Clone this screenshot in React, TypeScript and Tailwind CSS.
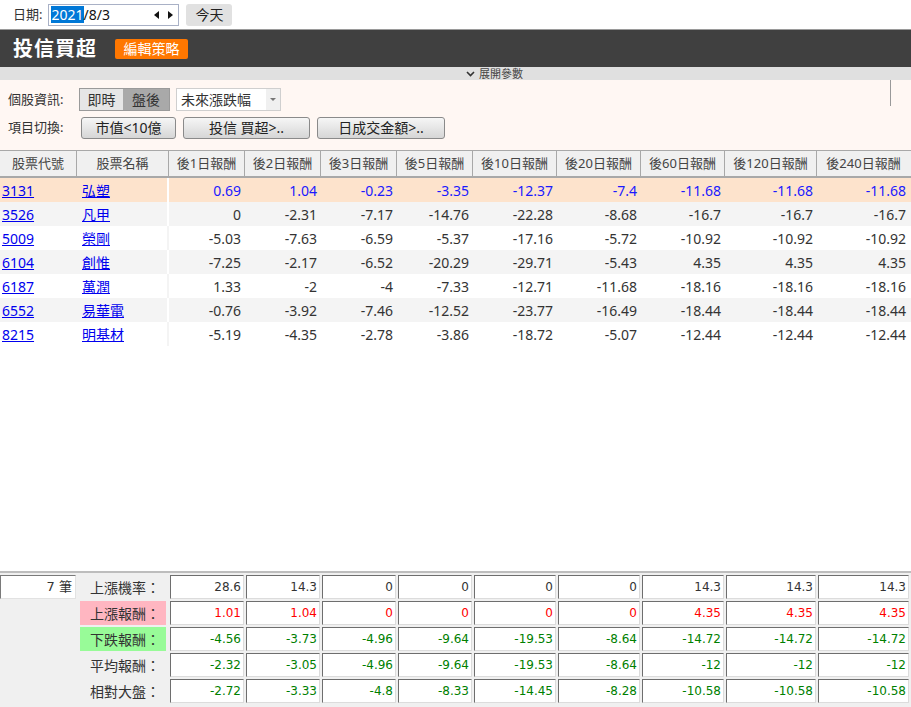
import React from "react";

const FONT = { fontFamily: '"Noto Sans", "Noto Sans CJK TC", sans-serif' };
const NUM_FONT = { fontFamily: '"DejaVu Sans", "Noto Sans CJK TC", sans-serif' };

const COLS = "grid grid-cols-[77px_92px_76px_76px_76px_76px_84px_84px_84px_92px_93px]";

const headers = [
  "後1日報酬",
  "後2日報酬",
  "後3日報酬",
  "後5日報酬",
  "後10日報酬",
  "後20日報酬",
  "後60日報酬",
  "後120日報酬",
  "後240日報酬",
];

const rows: { code: string; name: string; vals: string[] }[] = [
  { code: "3131", name: "弘塑", vals: ["0.69", "1.04", "-0.23", "-3.35", "-12.37", "-7.4", "-11.68", "-11.68", "-11.68"] },
  { code: "3526", name: "凡甲", vals: ["0", "-2.31", "-7.17", "-14.76", "-22.28", "-8.68", "-16.7", "-16.7", "-16.7"] },
  { code: "5009", name: "榮剛", vals: ["-5.03", "-7.63", "-6.59", "-5.37", "-17.16", "-5.72", "-10.92", "-10.92", "-10.92"] },
  { code: "6104", name: "創惟", vals: ["-7.25", "-2.17", "-6.52", "-20.29", "-29.71", "-5.43", "4.35", "4.35", "4.35"] },
  { code: "6187", name: "萬潤", vals: ["1.33", "-2", "-4", "-7.33", "-12.71", "-11.68", "-18.16", "-18.16", "-18.16"] },
  { code: "6552", name: "易華電", vals: ["-0.76", "-3.92", "-7.46", "-12.52", "-23.77", "-16.49", "-18.44", "-18.44", "-18.44"] },
  { code: "8215", name: "明基材", vals: ["-5.19", "-4.35", "-2.78", "-3.86", "-18.72", "-5.07", "-12.44", "-12.44", "-12.44"] },
];

const summary: { label: string; labelBg: string; color: string; vals: string[] }[] = [
  { label: "上漲機率：", labelBg: "", color: "text-[#333]", vals: ["28.6", "14.3", "0", "0", "0", "0", "14.3", "14.3", "14.3"] },
  { label: "上漲報酬：", labelBg: "bg-[#ffb6c1]", color: "text-[#ff0000]", vals: ["1.01", "1.04", "0", "0", "0", "0", "4.35", "4.35", "4.35"] },
  { label: "下跌報酬：", labelBg: "bg-[#98fb98]", color: "text-[#008000]", vals: ["-4.56", "-3.73", "-4.96", "-9.64", "-19.53", "-8.64", "-14.72", "-14.72", "-14.72"] },
  { label: "平均報酬：", labelBg: "", color: "text-[#008000]", vals: ["-2.32", "-3.05", "-4.96", "-9.64", "-19.53", "-8.64", "-12", "-12", "-12"] },
  { label: "相對大盤：", labelBg: "", color: "text-[#008000]", vals: ["-2.72", "-3.33", "-4.8", "-8.33", "-14.45", "-8.28", "-10.58", "-10.58", "-10.58"] },
];

function GrayButton({ children, w }: { children: React.ReactNode; w: string }) {
  return (
    <button
      className={`${w} h-[22px] rounded-[3px] border border-[#8a8a8a] bg-gradient-to-b from-[#f6f6f6] to-[#d6d6d6] text-[14px] leading-none text-[#222]`}
    >
      {children}
    </button>
  );
}

export default function App() {
  return (
    <div className="w-[911px] h-[707px] bg-white flex flex-col overflow-hidden" style={FONT}>
      {/* date bar */}
      <div className="h-[29px] flex items-center pl-[13px] text-[13px] text-[#333]">
        <span>日期:</span>
        <div className="ml-[6px] w-[131px] h-[22px] border border-[#a9b1c6] flex items-center pl-[2px] text-[14px]">
          <span className="bg-[#0078d7] text-white leading-[17px]">2021</span>
          <span className="text-[#111] leading-[17px]">/8/3</span>
          <div className="ml-auto mr-[5px] flex items-center gap-[9px]">
            <svg width="5" height="8" viewBox="0 0 5 8"><path d="M5 0 L0 4 L5 8 Z" fill="#111" /></svg>
            <svg width="5" height="8" viewBox="0 0 5 8"><path d="M0 0 L5 4 L0 8 Z" fill="#111" /></svg>
          </div>
        </div>
        <button className="ml-[7px] w-[46px] h-[22px] rounded-[3px] bg-[#e1e1e1] text-[14px] text-[#222] leading-none">
          今天
        </button>
      </div>

      {/* title bar */}
      <div className="h-[38px] bg-[#404040] border-t border-[#9a9a9a] flex items-center pl-[13px]">
        <span className="text-white text-[20px] font-bold tracking-[1px]">投信買超</span>
        <button className="ml-[18px] h-[20px] w-[73px] rounded-[2px] bg-[#ff7700] text-white text-[14px] leading-none">
          編輯策略
        </button>
      </div>

      {/* expand bar */}
      <div className="h-[13px] bg-[#e0e0e0] flex items-center pl-[466px] text-[11px] text-[#444] leading-none">
        <svg width="9" height="6" viewBox="0 0 9 6" className="mr-[4px]">
          <path d="M1 1 L4.5 4.5 L8 1" stroke="#333" strokeWidth="1.6" fill="none" />
        </svg>
        展開參數
      </div>

      {/* params */}
      <div className="h-[70px] bg-[#fff7f3] relative pl-[8px] pt-[8px] text-[13px] text-[#333]">
        <div className="absolute left-[890px] top-0 w-px h-[26px] bg-[#999]" />
        <div className="flex items-center h-[23px]">
          <span className="w-[71px]">個股資訊:</span>
          <div className="flex h-[23px] border border-[#9a9a9a] text-[14px]">
            <span className="w-[43px] bg-[#e6e6e6] flex items-center justify-center">即時</span>
            <span className="w-[46px] bg-[#a9a9a9] flex items-center justify-center">盤後</span>
          </div>
          <div className="ml-[6px] w-[105px] h-[23px] border border-[#cfcfcf] bg-white flex items-center text-[14px]">
            <span className="pl-[4px]">未來漲跌幅</span>
            <div className="ml-auto w-[14px] h-full bg-[#f0f0f0] flex items-center justify-center">
              <svg width="6" height="3" viewBox="0 0 6 3"><path d="M0 0 L6 0 L3 3 Z" fill="#777" /></svg>
            </div>
          </div>
        </div>
        <div className="flex items-center h-[22px] mt-[6px]">
          <span className="w-[73px]">項目切換:</span>
          <GrayButton w="w-[95px]">市值&lt;10億</GrayButton>
          <span className="w-[7px]" />
          <GrayButton w="w-[127px]">投信 買超&gt;..</GrayButton>
          <span className="w-[7px]" />
          <GrayButton w="w-[128px]">日成交金額&gt;..</GrayButton>
        </div>
      </div>

      {/* table header */}
      <div className={`${COLS} h-[28px] bg-[#f0f0f0] border-t border-b-2 border-[#a8a8a8] text-[13px] text-[#444]`}>
        {["股票代號", "股票名稱", ...headers].map((h, i) => (
          <div
            key={h}
            className={`flex items-center justify-center ${i < 10 ? "border-r border-[#a8a8a8]" : ""}`}
          >
            {h}
          </div>
        ))}
      </div>

      {/* rows */}
      <div className="flex-1">
        {rows.map((r, idx) => {
          const bg = idx === 0 ? "bg-[#fde3cc]" : idx % 2 === 1 ? "bg-[#f4f4f4]" : "bg-white";
          const gap = idx % 2 === 1 || idx === 0 ? "border-[#ffffff]" : "border-[#f4f4f4]";
          const numColor = idx === 0 ? "text-[#1a1aff]" : "text-[#333]";
          return (
            <div key={r.code} className={`${COLS} h-[24px] ${bg} text-[14px]`}>
              <div className="flex items-center pl-[2px]">
                <a href="#" className="text-[#0000ee] underline">{r.code}</a>
              </div>
              <div className={`flex items-center pl-[5px] border-r-2 ${gap}`}>
                <a href="#" className="text-[#0000ee] underline">{r.name}</a>
              </div>
              {r.vals.map((v, j) => (
                <div key={j} className={`flex items-center justify-end pr-[4px] ${numColor}`}>
                  {v}
                </div>
              ))}
            </div>
          );
        })}
      </div>

      {/* summary */}
      <div className="h-[136px] bg-[#f0f0f0] border-t-2 border-[#bdbdbd] pt-[2px] flex flex-col gap-[2px]">
        {summary.map((s, si) => (
          <div key={s.label} className={`${COLS} h-[24px]`}>
            <div className="pr-[1px]">
              {si === 0 && (
                <div
                  className="h-[24px] bg-white border border-t-[#7a7a7a] border-l-[#7a7a7a] border-r-[#e2e2e2] border-b-[#e2e2e2] flex items-center justify-end pr-[3px] text-[13px] text-[#333]"
                  style={NUM_FONT}
                >
                  7 筆
                </div>
              )}
            </div>
            <div className="pl-[3px] pr-[3px]">
              <div className={`h-[24px] ${s.labelBg} flex items-center justify-end pr-[6px] text-[14px] text-[#333]`}>
                {s.label}
              </div>
            </div>
            {s.vals.map((v, j) => (
              <div key={j} className="px-[1px]">
                <div
                  className={`h-[24px] bg-white border border-t-[#6e6e6e] border-l-[#6e6e6e] border-r-[#dcdcdc] border-b-[#dcdcdc] flex items-center justify-end pr-[2px] text-[12px] ${s.color}`}
                  style={NUM_FONT}
                >
                  {v}
                </div>
              </div>
            ))}
          </div>
        ))}
      </div>
    </div>
  );
}
